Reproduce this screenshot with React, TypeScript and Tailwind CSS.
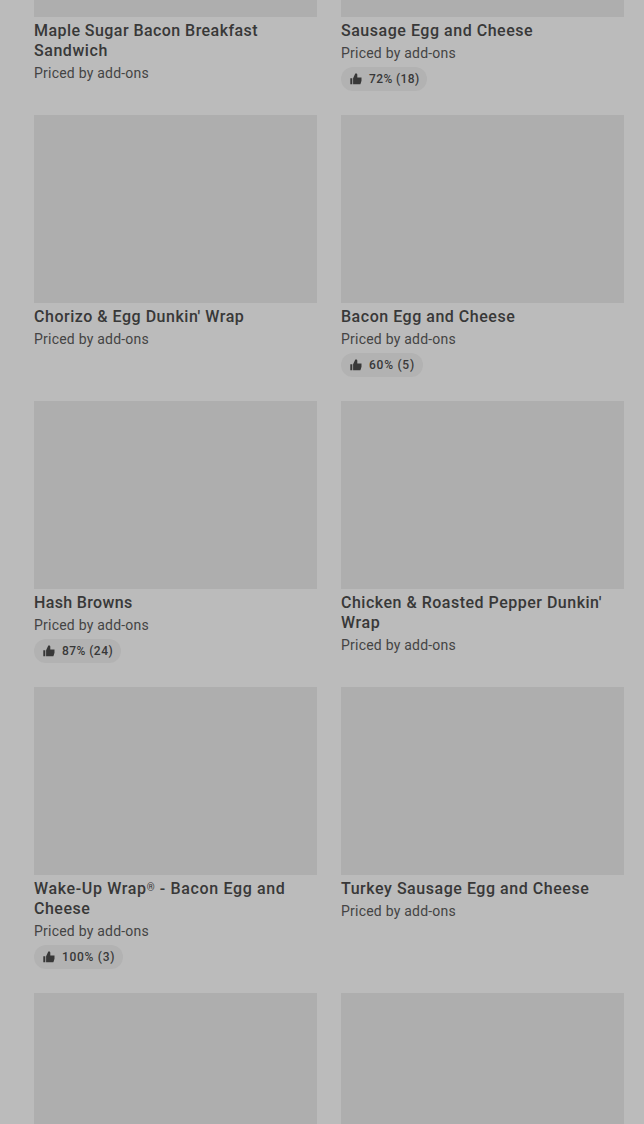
type Item = {
  lines: { text: string; tracking: string }[];
  rating?: string;
  ratingStyle?: string;
  ratingTracking?: string;
};

const items: Item[] = [
  { lines: [{ text: "Maple Sugar Bacon Breakfast", tracking: "tracking-[0.44px]" }, { text: "Sandwich", tracking: "tracking-[0.55px]" }] },
  { lines: [{ text: "Sausage Egg and Cheese", tracking: "tracking-[0.53px]" }], rating: "72% (18)", ratingStyle: "w-[86px]", ratingTracking: "tracking-[0.4px]" },
  { lines: [{ text: "Chorizo & Egg Dunkin' Wrap", tracking: "tracking-[0.52px]" }] },
  { lines: [{ text: "Bacon Egg and Cheese", tracking: "tracking-[0.52px]" }], rating: "60% (5)", ratingStyle: "w-[82px]", ratingTracking: "tracking-[0.75px]" },
  { lines: [{ text: "Hash Browns", tracking: "tracking-[0.34px]" }], rating: "87% (24)", ratingStyle: "w-[87px]", ratingTracking: "tracking-[0.45px]" },
  { lines: [{ text: "Chicken & Roasted Pepper Dunkin'", tracking: "tracking-[0.5px]" }, { text: "Wrap", tracking: "tracking-[0.6px]" }] },
  { lines: [{ text: "Wake-Up Wrap® - Bacon Egg and", tracking: "tracking-[0.64px]" }, { text: "Cheese", tracking: "tracking-[0.5px]" }], rating: "100% (3)", ratingStyle: "w-[89px]", ratingTracking: "tracking-[0.7px]" },
  { lines: [{ text: "Turkey Sausage Egg and Cheese", tracking: "tracking-[0.54px]" }] },
];

function Title({ text }: { text: string }) {
  const [before, after] = text.split("®");
  if (after === undefined) return <>{text}</>;
  return (
    <>
      {before}
      <span className="align-[3px] text-[10px] leading-none">®</span>
      {after}
    </>
  );
}

function ThumbUp() {
  return (
    <svg width="12" height="12" viewBox="0 0 12 12" fill="currentColor" className="shrink-0" aria-hidden="true">
      <path d="M0.3 5.2h2v6.1h-2zM3.1 5.2L5.3 0.6h1.5l0.5 0.8v3.2h4.2v3.2l-1.1 3.5H3.1z" />
    </svg>
  );
}

function Card({ item, first }: { item: Item; first: boolean }) {
  return (
    <article className="flex flex-col items-start">
      <div className={first ? "h-[17px] w-full bg-[#aeaeae]" : "h-[188px] w-full bg-[#aeaeae]"} />
      <h3 className="mt-1 text-base leading-5 font-medium text-[#383838]">
        {item.lines.map((line) => (
          <span key={line.text} className={`block h-5 whitespace-nowrap ${line.tracking}`}>
            <Title text={line.text} />
          </span>
        ))}
      </h3>
      <p className="mt-0.5 text-sm leading-5 tracking-[0.22px] whitespace-nowrap text-[#444444]">Priced by add-ons</p>
      {item.rating && (
        <div className={`mt-1 flex h-6 items-center gap-[7px] rounded-full bg-[#b2b2b2] pl-[9px] text-[#383838] ${item.ratingStyle}`}>
          <ThumbUp />
          <span className={`text-xs leading-5 font-medium whitespace-nowrap ${item.ratingTracking}`}>{item.rating}</span>
        </div>
      )}
    </article>
  );
}

export default function App() {
  return (
    <main className="h-[1124px] w-[644px] overflow-hidden bg-[#bbbbbb] pr-5 pl-[34px] font-['Roboto',sans-serif]">
      <div className="grid grid-cols-2 gap-x-6 gap-y-6">
        {items.map((item, i) => (
          <Card key={i} item={item} first={i < 2} />
        ))}
        <div className="h-[188px] bg-[#aeaeae]" />
        <div className="h-[188px] bg-[#aeaeae]" />
      </div>
    </main>
  );
}
